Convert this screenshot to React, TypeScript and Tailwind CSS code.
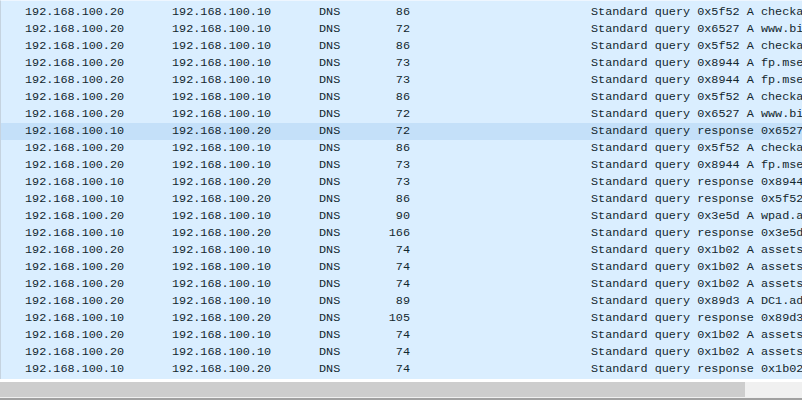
import React from "react";

type Row = [string, string, string, string, string];

const rows: Row[] = [
  ["192.168.100.20", "192.168.100.10", "DNS", "73", "Standard query 0x8944 A fp.msedge.net"],
  ["192.168.100.20", "192.168.100.10", "DNS", "86", "Standard query 0x5f52 A checkappexec.microsoft.com"],
  ["192.168.100.20", "192.168.100.10", "DNS", "72", "Standard query 0x6527 A www.bing.com"],
  ["192.168.100.20", "192.168.100.10", "DNS", "86", "Standard query 0x5f52 A checkappexec.microsoft.com"],
  ["192.168.100.20", "192.168.100.10", "DNS", "73", "Standard query 0x8944 A fp.msedge.net"],
  ["192.168.100.20", "192.168.100.10", "DNS", "73", "Standard query 0x8944 A fp.msedge.net"],
  ["192.168.100.20", "192.168.100.10", "DNS", "86", "Standard query 0x5f52 A checkappexec.microsoft.com"],
  ["192.168.100.20", "192.168.100.10", "DNS", "72", "Standard query 0x6527 A www.bing.com"],
  ["192.168.100.10", "192.168.100.20", "DNS", "72", "Standard query response 0x6527 A www.bing.com"],
  ["192.168.100.20", "192.168.100.10", "DNS", "86", "Standard query 0x5f52 A checkappexec.microsoft.com"],
  ["192.168.100.20", "192.168.100.10", "DNS", "73", "Standard query 0x8944 A fp.msedge.net"],
  ["192.168.100.10", "192.168.100.20", "DNS", "73", "Standard query response 0x8944 A fp.msedge.net"],
  ["192.168.100.10", "192.168.100.20", "DNS", "86", "Standard query response 0x5f52 A checkappexec.microsoft.com"],
  ["192.168.100.20", "192.168.100.10", "DNS", "90", "Standard query 0x3e5d A wpad.ad.local"],
  ["192.168.100.10", "192.168.100.20", "DNS", "166", "Standard query response 0x3e5d A wpad.ad.local"],
  ["192.168.100.20", "192.168.100.10", "DNS", "74", "Standard query 0x1b02 A assets.msn.com"],
  ["192.168.100.20", "192.168.100.10", "DNS", "74", "Standard query 0x1b02 A assets.msn.com"],
  ["192.168.100.20", "192.168.100.10", "DNS", "74", "Standard query 0x1b02 A assets.msn.com"],
  ["192.168.100.20", "192.168.100.10", "DNS", "89", "Standard query 0x89d3 A DC1.ad.local"],
  ["192.168.100.10", "192.168.100.20", "DNS", "105", "Standard query response 0x89d3 A DC1.ad.local"],
  ["192.168.100.20", "192.168.100.10", "DNS", "74", "Standard query 0x1b02 A assets.msn.com"],
  ["192.168.100.20", "192.168.100.10", "DNS", "74", "Standard query 0x1b02 A assets.msn.com"],
  ["192.168.100.10", "192.168.100.20", "DNS", "74", "Standard query response 0x1b02 A assets.msn.com"],
];

export default function App() {
  return (
    <div
      className="w-[802px] h-[402px] bg-white overflow-hidden flex flex-col text-[#12272e] text-[11.8px]"
      style={{ fontFamily: '"Liberation Mono", "DejaVu Sans Mono", monospace' }}
    >
      <div className="h-[379px] overflow-hidden bg-[#daeeff] border-l border-[#c5d3e0] border-t border-t-[#eef6ff] shrink-0">
        <div className="-mt-[14px] flex flex-col">
          {rows.map((r, i) => (
            <div
              key={i}
              className={
                "h-[17px] flex items-center whitespace-nowrap " +
                (i === 8 ? "bg-[#c4e0f9]" : "")
              }
            >
              <div className="w-[171px] pl-[24px] shrink-0">{r[0]}</div>
              <div className="w-[147px] shrink-0">{r[1]}</div>
              <div className="w-[50px] shrink-0">{r[2]}</div>
              <div className="w-[41px] text-right shrink-0">{r[3]}</div>
              <div className="w-[181px] shrink-0" />
              <div className="shrink-0">{r[4]}</div>
            </div>
          ))}
        </div>
      </div>
      <div className="h-[3px] bg-white shrink-0" />
      <div className="h-[15px] flex shrink-0 bg-[#f0f0f0]">
        <div className="w-[745px] bg-[#cdcdcd]" />
      </div>
      <div className="h-[1px] bg-[#f0f0f0] shrink-0" />
      <div className="h-[2px] bg-[#a0a0a0] shrink-0" />
      <div className="flex-1 bg-white" />
    </div>
  );
}
